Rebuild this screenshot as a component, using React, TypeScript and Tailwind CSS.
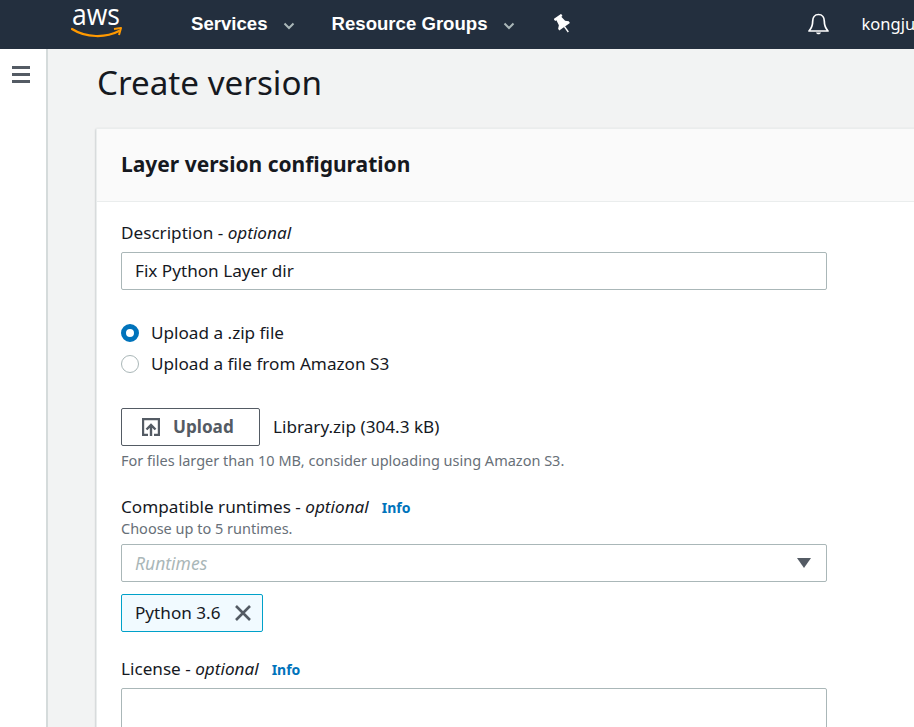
import React from "react";

const Chevron = () => (
  <svg width="12" height="8" viewBox="0 0 12 8" className="text-[#aab7b8]">
    <path d="M1.5 1.5 6 6l4.5-4.5" fill="none" stroke="currentColor" strokeWidth="2" />
  </svg>
);

const AwsLogo = () => (
  <svg width="52" height="40" viewBox="0 0 52 40">
    <text
      x="1"
      y="25"
      fill="#ffffff"
      fontSize="30"
      textLength="48"
      lengthAdjust="spacingAndGlyphs"
      fontFamily="'Open Sans', sans-serif"
    >
      aws
    </text>
    <path d="M1 29c14 9 34 9 47 2" fill="none" stroke="#f90" strokeWidth="2.2" strokeLinecap="round" />
    <path d="M43 29l7-1-2 7" fill="none" stroke="#f90" strokeWidth="2" strokeLinejoin="round" />
  </svg>
);

const Pin = () => (
  <svg width="16" height="19" viewBox="0 0 16 19">
    <g transform="rotate(-35 8 9)">
      <path d="M3.500 1h9v2.500h-1.500l.8 5.500 2.700 2.500v2h-13v-2L4.200 9 5 3.500H3.500z" fill="#ffffff" />
      <path d="M8 13v7" stroke="#ffffff" strokeWidth="1.400" />
    </g>
  </svg>
);

const Bell = () => (
  <svg width="21" height="23" viewBox="0 0 21 23">
    <path
      d="M10.500 1.500c-3.800 0-5.800 3-5.800 6.500 0 5-1 7-3.700 10h19c-2.700-3-3.700-5-3.700-10 0-3.500-2-6.500-5.800-6.500z"
      fill="none"
      stroke="#ffffff"
      strokeWidth="1.700"
      strokeLinejoin="round"
    />
    <path d="M8 19.500h5c-.5 2.400-4.500 2.400-5 0z" fill="#ffffff" />
  </svg>
);

const UploadIcon = () => (
  <svg width="18" height="18" viewBox="0 0 18 18" className="shrink-0 text-[#545b64]">
    <path d="M6 17H1V1h16v16h-5" fill="none" stroke="currentColor" strokeWidth="2.400" />
    <path d="M9 18V7M4.500 11.500 9 7l4.500 4.500" fill="none" stroke="currentColor" strokeWidth="2.400" />
  </svg>
);

const CloseIcon = () => (
  <svg width="18" height="18" viewBox="0 0 18 18" className="ml-[13px] shrink-0 text-[#545b64]">
    <path d="M2 2l14 14M16 2 2 16" fill="none" stroke="currentColor" strokeWidth="2.600" />
  </svg>
);

const Info = () => <span className="text-[14px] font-bold text-[#0073bb]">Info</span>;

export default function App() {
  return (
    <div className="flex h-[727px] w-[914px] flex-col overflow-hidden bg-white font-['Noto_Sans',sans-serif] text-[17.150px] text-[#16191f]">
      <header className="flex h-[49px] shrink-0 items-center whitespace-nowrap bg-[#232f3e] font-['Liberation_Sans',sans-serif] text-white">
        <div className="-mt-[9px] ml-[71px] w-[120px] shrink-0">
          <AwsLogo />
        </div>
        <span className="-mt-[2px] text-[18.600px] font-bold">Services</span>
        <span className="ml-[15px] mt-[3px]"><Chevron /></span>
        <span className="-mt-[2px] ml-[37px] text-[18.600px] font-bold">Resource Groups</span>
        <span className="ml-[15px] mt-[3px]"><Chevron /></span>
        <span className="-mt-[2px] ml-[39px]"><Pin /></span>
        <span className="ml-[238px]"><Bell /></span>
        <span className="ml-[33px] font-['Noto_Sans',sans-serif] text-[16.500px]">kongju</span>
      </header>

      <div className="flex min-h-0 flex-1">
        <aside className="w-[48px] shrink-0 border-r-2 border-[#d5dbdb] pl-[12px] pt-[17px]">
          <div className="flex w-[18px] flex-col gap-[4px]">
            <div className="h-[3px] bg-[#545b64]" />
            <div className="h-[3px] bg-[#545b64]" />
            <div className="h-[3px] bg-[#545b64]" />
          </div>
        </aside>

        <main className="min-w-0 flex-1 bg-[#f2f3f3] pl-[48px]">
          <h1 className="h-[79px] whitespace-nowrap pl-px pt-[10px] text-[33.200px] leading-[48px] text-[#16191f]">
            Create version
          </h1>

          <section className="h-[700px] w-[900px] rounded-[1px] border-l border-t border-[#eaeded] bg-white shadow-[0_1px_2px_rgba(0,28,36,0.4)]">
            <div className="flex h-[73px] items-center border-b border-[#eaeded] bg-[#fafafa] pl-[24px] text-[21px] font-bold">
              Layer version configuration
            </div>

            <div className="w-[731px] pl-[24px]">
              <div className="mt-[19px] h-[24px] leading-[24px]">
                Description - <em>optional</em>
              </div>
              <div className="mt-[7px] flex h-[38px] w-[706px] items-center rounded-[2px] border border-[#aab7b8] pl-[13px]">
                Fix Python Layer dir
              </div>

              <div className="mt-[27px] flex h-[31px] items-center gap-[12px]">
                <div className="h-[18px] w-[18px] rounded-full border-[5px] border-[#0073bb] bg-white" />
                Upload a .zip file
              </div>
              <div className="flex h-[31px] items-center gap-[12px]">
                <div className="h-[18px] w-[18px] rounded-full border border-[#aab7b8] bg-white" />
                Upload a file from Amazon S3
              </div>

              <div className="mt-[29px] flex items-center">
                <div className="flex h-[38px] w-[139px] items-center gap-[13px] rounded-[2px] border border-[#545b64] pl-[20px] font-bold text-[#545b64]">
                  <UploadIcon />
                  Upload
                </div>
                <span className="ml-[13px]">Library.zip (304.3 kB)</span>
              </div>
              <div className="mt-[4px] h-[20px] text-[14.500px] leading-[20px] text-[#687078]">
                For files larger than 10 MB, consider uploading using Amazon S3.
              </div>

              <div className="mt-[25px] flex h-[23px] items-center">
                <span>
                  Compatible runtimes - <em>optional</em>
                </span>
                <span className="ml-[13px]"><Info /></span>
              </div>
              <div className="h-[20px] text-[14.500px] leading-[20px] text-[#687078]">Choose up to 5 runtimes.</div>
              <div className="mt-[6px] flex h-[38px] w-[706px] items-center justify-between rounded-[2px] border border-[#aab7b8] pl-[13px] pr-[15px]">
                <em className="text-[17.500px] text-[#aab7b8]">Runtimes</em>
                <div className="h-0 w-0 border-x-[7px] border-t-[10px] border-x-transparent border-t-[#545b64]" />
              </div>
              <div className="mt-[12px] flex h-[38px] w-[142px] items-center rounded-[2px] border border-[#00a1c9] bg-[#f1faff] pl-[13px]">
                Python 3.6
                <CloseIcon />
              </div>

              <div className="mt-[25px] flex h-[24px] items-center">
                <span>
                  License - <em>optional</em>
                </span>
                <span className="ml-[13px]"><Info /></span>
              </div>
              <div className="mt-[7px] h-[80px] w-[706px] rounded-[2px] border border-[#aab7b8]" />
            </div>
          </section>
        </main>
      </div>
    </div>
  );
}
